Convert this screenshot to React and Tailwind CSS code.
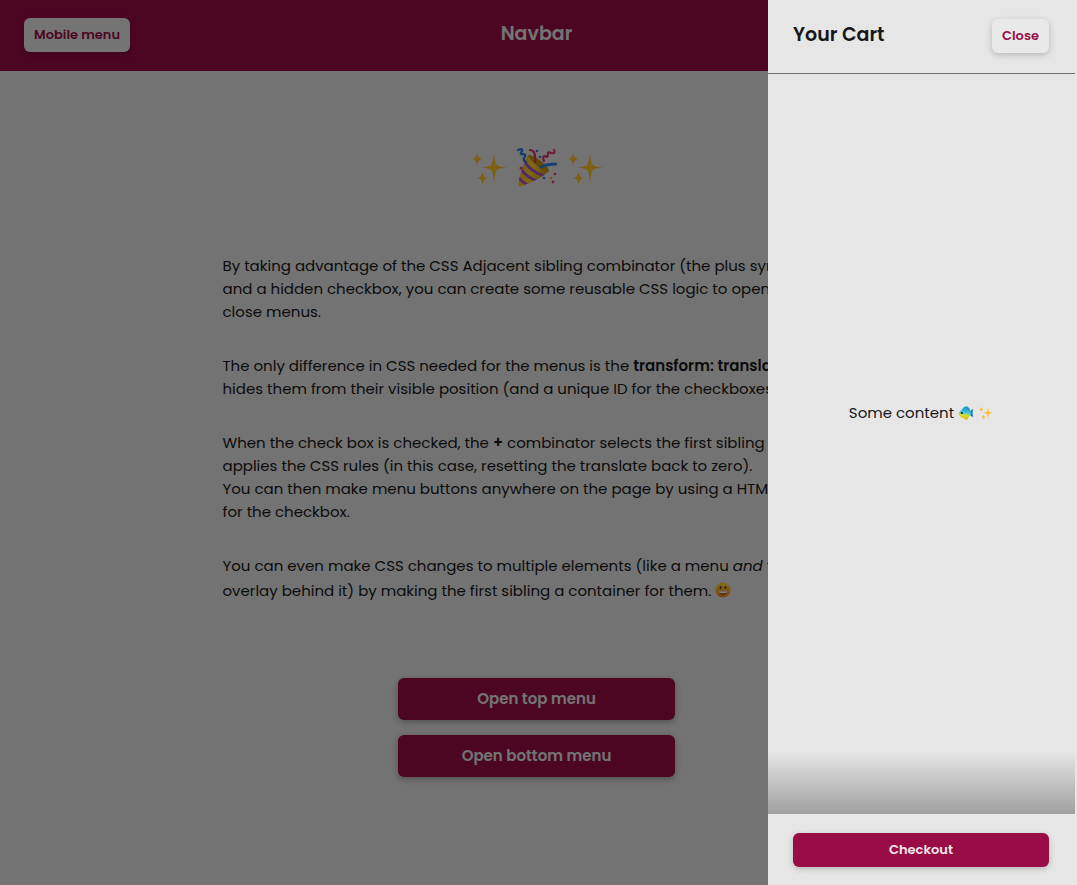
import React from "react";

function Sparkles({ className }) {
  return (
    <svg viewBox="0 0 40 40" className={className} role="img" aria-label="sparkles">
      <defs>
        <linearGradient id="spark" x1="0" y1="0" x2="1" y2="1">
          <stop offset="0" stopColor="#f59a4a" />
          <stop offset="0.5" stopColor="#fbc81f" />
          <stop offset="1" stopColor="#ee8a3c" />
        </linearGradient>
      </defs>
      <g fill="url(#spark)">
        <path d="M25 4 Q25.500 13 27.500 16.500 Q29.500 19 38 19.500 Q29.500 20 27.500 22.500 Q25.500 26 25 36 Q24.500 26 22.500 22.500 Q20.500 20 12 19.500 Q20.500 19 22.500 16.500 Q24.500 13 25 4Z" />
        <path d="M8 4 Q8.300 10 13 11 Q8.300 12 8 18 Q7.700 12 3 11 Q7.700 10 8 4Z" />
        <path d="M13.500 24 Q14 29 18.500 30 Q14 31 13.500 37 Q13 31 8.500 30 Q13 29 13.500 24Z" />
      </g>
    </svg>
  );
}

function PartyPopper({ className }) {
  return (
    <svg viewBox="0 0 40 40" className={className} role="img" aria-label="party popper">
      <defs>
        <linearGradient id="cone" x1="0" y1="0.3" x2="1" y2="0.6">
          <stop offset="0" stopColor="#f2b024" />
          <stop offset="0.45" stopColor="#fbd02f" />
          <stop offset="1" stopColor="#c98d12" />
        </linearGradient>
        <clipPath id="coneClip">
          <path d="M11 7 Q22 9 32 23 Q24 31 5 38 Q1 39 1.500 35 Q4 20 11 7Z" />
        </clipPath>
      </defs>
      <path d="M11 7 Q22 9 32 23 Q24 31 5 38 Q1 39 1.500 35 Q4 20 11 7Z" fill="url(#cone)" />
      <g clipPath="url(#coneClip)" stroke="#a650cf" strokeWidth="2.800" fill="none">
        <path d="M7 13 Q13 23 27 28" />
        <path d="M4 21 Q9 29 20 33" />
        <path d="M1 29 Q5 34 11 37" />
      </g>
      <path d="M11 7 Q15 6 24 13 Q32 20 32 23 Q29 25 20 18 Q12 11 11 7Z" fill="#c6930f" />
      <g fill="none" strokeLinecap="round" strokeWidth="2.200">
        <path d="M1 2 Q6 0 5 3 Q2 7 6 6 Q10 6 7 10 Q6 13 9 14" stroke="#2c78d4" />
        <path d="M13 2 Q19 2 18 14" stroke="#e13258" />
        <path d="M37 2 Q39 6 34 5 Q30 3 31 7 Q31 10 28 8 Q25 8 27 13" stroke="#e13270" />
        <path d="M24 19 Q30 16 39 16" stroke="#2c86e4" strokeWidth="2.800" />
      </g>
      <g fill="#2f7fdc">
        <circle cx="20" cy="3" r="1.300" />
        <circle cx="23" cy="9" r="1.300" />
        <circle cx="27" cy="30" r="1.300" />
      </g>
      <g fill="#ea4068">
        <circle cx="4" cy="20" r="1.500" />
        <circle cx="38" cy="26" r="1.300" />
        <circle cx="36" cy="34" r="1.400" />
      </g>
      <circle cx="34" cy="30" r="1.300" fill="#f4a52d" />
    </svg>
  );
}

function Fish({ className }) {
  return (
    <svg viewBox="0 0 20 20" className={className} role="img" aria-label="tropical fish">
      <defs>
        <linearGradient id="fishBody" x1="0.6" y1="0" x2="0.4" y2="1">
          <stop offset="0" stopColor="#1ba0d2" />
          <stop offset="0.4" stopColor="#45c3dc" />
          <stop offset="0.65" stopColor="#d8dc2c" />
          <stop offset="1" stopColor="#e3c61a" />
        </linearGradient>
      </defs>
      <path d="M5 6 Q7 1 12 2 Q15 4 15 8Z" fill="#2497c4" />
      <path d="M14 9 Q16 6 19 5 Q17.500 10 19 15 Q16 14 14 12Z" fill="#1d7fa8" />
      <path d="M0.500 11 Q4 4 10 4 Q16 6 16.500 10.500 Q14 17 9 17.500 Q3 16.500 0.500 11Z" fill="url(#fishBody)" />
      <path d="M8 17 L13 15 L11 19Z" fill="#d2b61c" />
      <circle cx="4.800" cy="10" r="1.300" fill="#171717" />
    </svg>
  );
}

function Grin({ className }) {
  return (
    <svg viewBox="0 0 20 20" className={className} role="img" aria-label="grinning face">
      <defs>
        <linearGradient id="face" x1="0" y1="0" x2="0" y2="1">
          <stop offset="0" stopColor="#ffd83a" />
          <stop offset="1" stopColor="#f08c18" />
        </linearGradient>
      </defs>
      <circle cx="10" cy="10" r="9.500" fill="url(#face)" />
      <ellipse cx="7" cy="7" rx="1.200" ry="2" fill="#5b3411" />
      <ellipse cx="13" cy="7" rx="1.200" ry="2" fill="#5b3411" />
      <path d="M4 11 Q10 12 16 11 Q15 16.500 10 16.500 Q5 16.500 4 11Z" fill="#a8601c" />
      <path d="M4.500 11.300 Q10 12.300 15.500 11.300 L14.800 13.500 Q10 14.500 5.200 13.500Z" fill="#fff" />
    </svg>
  );
}

const smallButton = "rounded-md bg-[#e9e9e9] px-[10px] text-[13px] leading-[34px] font-semibold text-[#990c45] shadow-[0_2px_6px_rgba(0,0,0,0.2)]";
const wideButton = "h-[42px] w-full rounded-md bg-[#990c45] text-[15px] font-semibold text-[#e6e6e6] shadow-[0_2px_6px_rgba(0,0,0,0.3)]";

export default function App() {
  return (
    <div className="min-h-screen overflow-x-hidden bg-[#e6e6e6] font-['Poppins','Inter',sans-serif] text-[#171717]">
      <header className="grid h-[71px] grid-cols-[1fr_auto_1fr] items-center bg-[#990c45] pr-[28px] pb-[2px] pl-6">
        <button type="button" className={`${smallButton} justify-self-start`}>Mobile menu</button>
        <h1 className="text-[19px] font-semibold text-[#e6e6e6]">Navbar</h1>
      </header>

      <div className="pr-1">
        <main className="mx-auto flex w-full max-w-[628px] flex-col items-center">
          <div className="mt-[77px] flex h-10 items-center gap-2">
            <Sparkles className="size-10" />
            <PartyPopper className="size-10" />
            <Sparkles className="size-10" />
          </div>
          <div className="mt-[66px] flex w-full flex-col gap-[31px] text-[15px] leading-[23px] whitespace-nowrap">
            <p>
              By taking advantage of the CSS Adjacent sibling combinator (the plus symbol)<br />
              and a hidden checkbox, you can create some reusable CSS logic to open and<br />
              close menus.
            </p>
            <p>
              The only difference in CSS needed for the menus is the <b className="font-semibold">transform: translate</b> that<br />
              hides them from their visible position (and a unique ID for the checkboxes).
            </p>
            <p>
              When the check box is checked, the <b className="font-semibold">+</b> combinator selects the first sibling and<br />
              applies the CSS rules (in this case, resetting the translate back to zero).<br />
              You can then make menu buttons anywhere on the page by using a HTML label<br />
              for the checkbox.
            </p>
            <p>
              You can even make CSS changes to multiple elements (like a menu <i>and</i> the<br />
              overlay behind it) by making the first sibling a container for them. <Grin className="mt-[5px] inline size-4 align-[-2px]" />
            </p>
          </div>
          <div className="mt-[76px] flex w-[277px] flex-col gap-[15px] pb-[108px]">
            <button type="button" className={wideButton}>Open top menu</button>
            <button type="button" className={wideButton}>Open bottom menu</button>
          </div>
        </main>
      </div>

      <div className="fixed inset-0 bg-black/50" />

      <aside aria-label="Your Cart" className="fixed inset-y-0 right-0 flex w-[309px] flex-col bg-[#e6e6e6] pr-[2px]">
        <div className="flex h-[74px] items-center justify-between border-b border-[#737373] pr-[26px] pb-[2px] pl-[25px]">
          <h2 className="text-[19px] font-semibold">Your Cart</h2>
          <button type="button" className={smallButton}>Close</button>
        </div>
        <div className="flex flex-1 flex-col">
          <p className="flex flex-1 items-center justify-center gap-1 text-[15px]">
            Some content
            <Fish className="size-4" />
            <Sparkles className="size-4" />
          </p>
          <div className="h-[62px] bg-linear-to-b from-[#e6e6e6] to-[#a0a0a0]" />
        </div>
        <div className="h-[71px] pt-[19px] pr-[26px] pl-[25px]">
          <button type="button" className="h-[34px] w-full rounded-md bg-[#990c45] text-[13px] font-semibold text-[#f2e6eb] shadow-[0_2px_6px_rgba(0,0,0,0.2)]">Checkout</button>
        </div>
      </aside>
    </div>
  );
}
